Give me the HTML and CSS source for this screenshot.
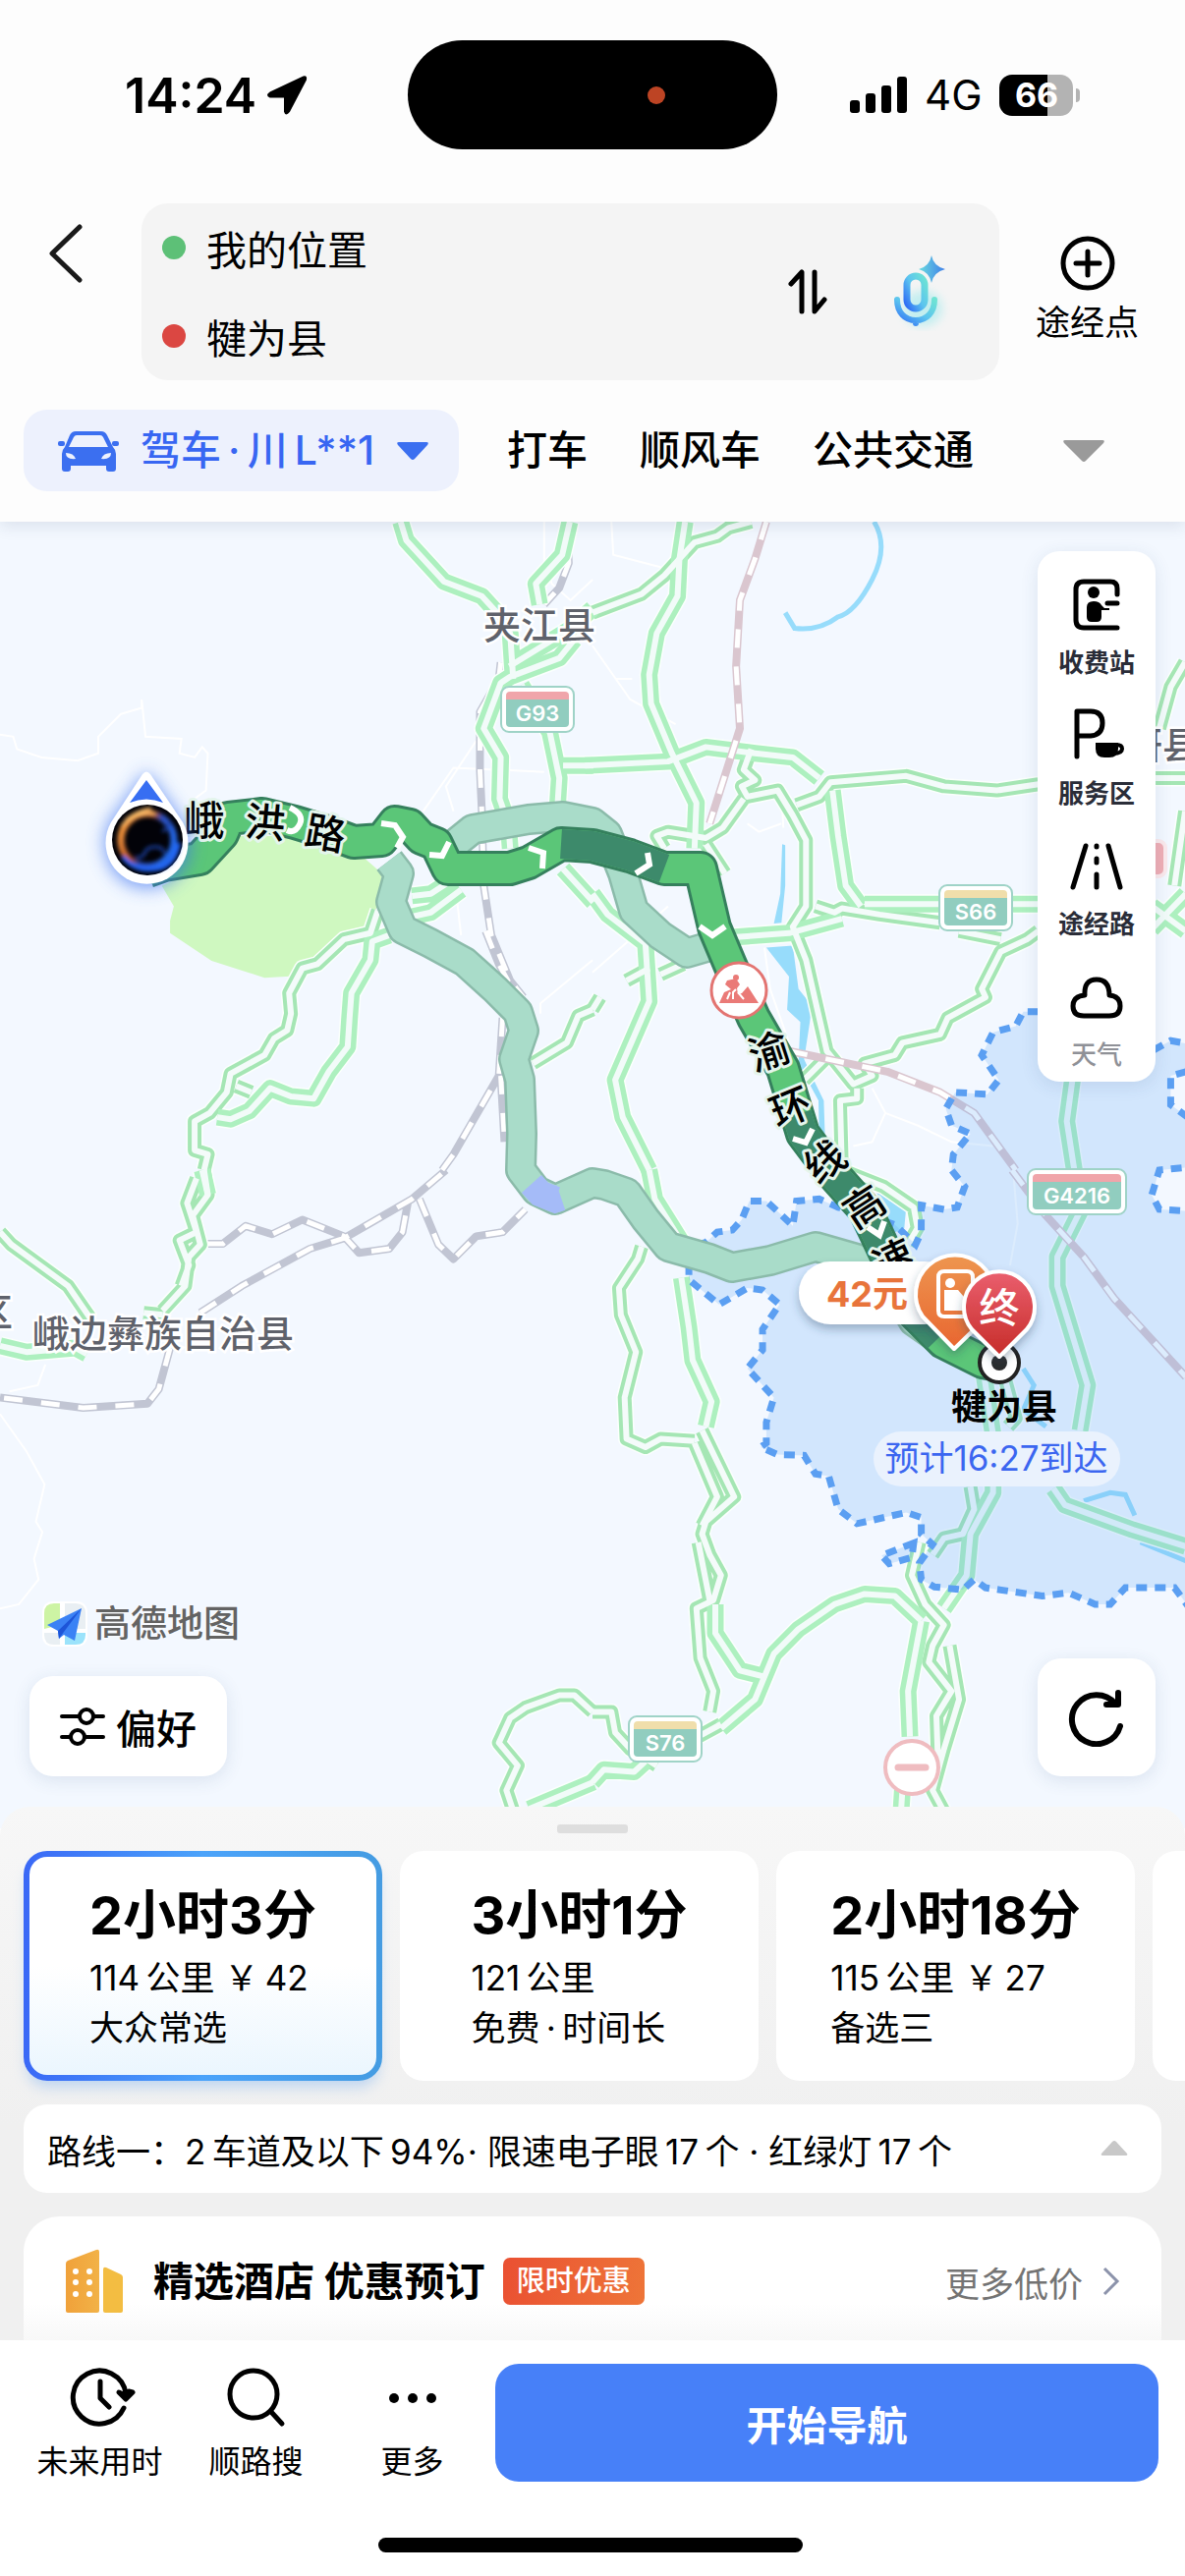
FILE: index.html
```html
<!DOCTYPE html>
<html lang="zh-CN">
<head>
<meta charset="utf-8">
<meta name="viewport" content="width=device-width">
<title>路线规划</title>
<link rel="stylesheet" href="styles.css">
</head>
<body>
<header class="header">
  <div class="status">
    <div class="status-left">
      <span class="clock">14:24</span>
      <svg width="42" height="42" viewBox="0 0 42 42"><path d="M38 2.500 4 18.500q-4 2.500 0 4h14q1 0 1 1v14q1 4 4 0L40 5q.8-3.600-2-2.500z" stroke="#000" stroke-width="2" stroke-linejoin="round"/></svg>
    </div>
    <div class="island"><span class="island-dot"></span></div>
    <div class="status-right">
      <svg width="60" height="38" viewBox="0 0 60 38"><rect x="1" y="24" width="10" height="13" rx="3"/><rect x="17" y="17" width="10" height="20" rx="3"/><rect x="33" y="9" width="10" height="28" rx="3"/><rect x="49" y="0" width="10" height="37" rx="3"/></svg>
      <span class="network">4G</span>
      <span class="battery">66</span>
      <span class="battery-nub"></span>
    </div>
  </div>

  <div class="search">
    <button class="back" aria-label="返回"><svg width="36" height="62" viewBox="0 0 36 62"><path d="M32 4 4 31l28 27"/></svg></button>
    <div class="places">
      <div class="fields">
        <label class="field"><span class="dot dot-start"></span><input type="text" value="我的位置" aria-label="起点"></label>
        <label class="field"><span class="dot dot-end"></span><input type="text" value="犍为县" aria-label="终点"></label>
      </div>
      <button class="plain" aria-label="交换"><svg class="line-icon" width="40" height="48" viewBox="0 0 40 48" stroke-width="5"><path d="M3 16 14 4v40M27 4v40l10-12"/></svg></button>
      <button class="plain mic" aria-label="语音"><svg width="60" height="80" viewBox="0 0 60 80">
        <defs>
          <linearGradient id="mic" x1="0" y1="1" x2="1" y2="0"><stop offset="0" stop-color="#2f6bf5"/><stop offset=".5" stop-color="#5cc4ef"/><stop offset="1" stop-color="#6ee3d4"/></linearGradient>
          <linearGradient id="spark" x1="0" y1="0" x2="1" y2="0"><stop offset="0" stop-color="#6adbe0"/><stop offset="1" stop-color="#3f7fe8"/></linearGradient>
          <filter id="soft" x="-50%" y="-50%" width="200%" height="200%"><feGaussianBlur stdDeviation="5"/></filter>
        </defs>
        <ellipse cx="32" cy="57" rx="20" ry="18" fill="#6be3e8" opacity=".35" filter="url(#soft)"/>
        <rect x="16" y="24" width="18" height="33" rx="9" fill="none" stroke="url(#mic)" stroke-width="7"/>
        <path d="M6 48c0 13 8 21 19 21s19-8 19-21M25 69v3" fill="none" stroke="url(#mic)" stroke-width="6" stroke-linecap="round"/>
        <path d="M41 3q2 11 14 14-12 3-14 14-2-11-13-14 11-3 13-14z" fill="url(#spark)"/>
      </svg></button>
    </div>
    <button class="plain via"><svg class="line-icon" width="56" height="56" viewBox="0 0 56 56" stroke-width="5"><circle cx="28" cy="28" r="25"/><path d="M28 16v24M16 28h24"/></svg><span>途经点</span></button>
  </div>

  <nav class="modes">
    <button class="mode mode-active">
      <svg width="62" height="44" viewBox="0 0 62 44"><path fill-rule="evenodd" d="M18 2h26q4 0 6 4l6 12q3 3 3 7v15q0 3-3 3h-4q-3 0-3-3v-3H13v3q0 3-3 3H7q-3 0-3-3V25q0-4 3-7l5-12q2-4 6-4zm1 4q-2 0-3 2l-5 10h40L46 8q-1-2-3-2zM8 24q0 7 10 6-2-6-10-6zm46 0q0 7-10 6 2-6 10-6z"/><rect x="0" y="12" width="7" height="5" rx="2"/><rect x="55" y="12" width="7" height="5" rx="2"/></svg>
      <span>驾车&thinsp;·&thinsp;川&thinsp;L**1</span>
      <svg width="34" height="20" viewBox="0 0 34 20"><path d="M3 1h28q3 0 1 3L19 18q-2 2-4 0L2 4Q0 1 3 1z"/></svg>
    </button>
    <button class="mode">打车</button>
    <button class="mode">顺风车</button>
    <button class="mode">公共交通</button>
    <button class="plain modes-more" aria-label="展开"><svg width="44" height="24" viewBox="0 0 44 24"><path d="M3 1h38q3 0 1 3L24 22q-2 2-4 0L2 4Q0 1 3 1z"/></svg></button>
  </nav>
</header>

<main class="map">
  <svg class="map-canvas" viewBox="0 0 1206 1330" preserveAspectRatio="xMidYMin slice">
    <defs>
      <g id="main-roads">
        <g class="nw"><path d="M1060 0 1075 45 1175 145 1275 180 1315 220 1350 270 1358 380M1520 285 1480 330 1350 375 1325 390 1280 500 1325 570 1322 670 1345 730 1350 790M1380 395 1455 510 1480 620 1475 690M1490 590H1570M1090 905 1140 900 1190 870M1090 955 1140 945 1220 890M1490 840 1570 920M1030 1000 985 1015 980 1060 930 1140 925 1200 920 1270 870 1330 830 1395 770 1390 715 1370 660 1425 610 1445 575 1440"/></g>
        <g class="ne"><path d="M-140 200-150 150-80 80-60 0M-220 350-60 260 0 210M245 0 230 90 225 180 170 270 150 370 155 440 210 560 275 680 270 790M-20 590 200 580 300 545 430 560 530 570 600 620M635 650 650 760 670 880 710 930M370 1005 520 995 660 960M720 925H1180M0 900 40 950 140 1020 150 1160 60 1350 80 1440 150 1568M1270 1350 1255 1450 1275 1568M1480 930 1570 990M1480 985 1570 900"/></g>
        <g class="sw"><path d="M0 425 70 440 200 430 230 445M1400 1545 1570 1480M535 0 550 60"/></g>
        <g class="se"><path d="M150 0 165 70 240 180M235 260 255 380 265 460 315 560 300 620M340 1350 430 1280 480 1170 545 1110 640 1050 720 1025 800 1030 870 1090M870 1090 835 1260 840 1370M820 1500 815 1570M325 1050V1120L390 1210 455 1225M1030 460 1060 640 1060 780 1000 880 990 980 930 1060M1290 100 1230 210V280L1310 520 1290 630M1220 770 1250 810 1430 870 1570 910M0 1480 30 1450 110 1455 140 1430"/></g>
      </g>
      <g id="side-roads">
        <g class="nw"><path d="M1000 940 980 995 910 1010 840 1070 800 1080 765 1140 770 1190 760 1230 725 1250 700 1290 610 1335 600 1380 555 1430 515 1450V1520L550 1530 540 1568M625 1365 665 1380M1568 1180 1530 1195 1500 1260 1410 1310"/></g>
        <g class="ne"><path d="M0 220 130 175 190 130 270 50 330 35 360 15 420 0M540 685 600 665 630 630 830 615 930 640 1070 650 1180 635M1490 620H1570M420 550 400 600 430 625 395 640 410 665 490 650 530 710 565 770V930L530 980 565 1060 620 1280 690 1360 740 1340 720 1310 800 1290 820 1260 920 1240 940 1200 1040 1150 1030 1130 1080 1040 1150 1010 1180 990M400 670 345 740 300 765 200 750 170 760 190 790M300 780 350 850M590 930 640 945 660 935 760 950 920 970M970 990 1080 1010M560 1350 620 1295M700 1370 700 1395 655 1400 660 1568M90 1110 150 1080M180 1095 240 1070M0 1180 20 1150M1568 340 1530 400 1500 500M1568 700 1540 880"/></g>
        <g class="sw"><path d="M540 0 550 60 510 110 530 180 500 210 490 280 430 340M520 20 495 80 520 150 475 170 500 230 480 280M0 150 30 180 180 280 240 360M380 345 430 350M1568 1310 1520 1270 1480 1270 1390 1300 1350 1325 1320 1385 1370 1440 1340 1500 1365 1568"/></g>
        <g class="se"><path d="M130 185 120 215 70 285 75 350 115 440 85 550 90 650 140 670 180 650 270 655M290 630 375 790 300 850 290 880 310 930 340 980 320 1040 275 1060 285 1180 320 1260 310 1310M270 660 330 790 290 860M280 900 310 1040M865 900 845 980 880 1050 930 1100 900 1150 890 1190 950 1260 910 1320 915 1450M945 1150 970 1280 930 1400 900 1500 940 1568M1000 765 1010 820 980 880 930 890 900 930M1090 500 1120 600 1100 620M660 0 770 40 850 90 860 140 835 180M0 1310 50 1310 60 1360 100 1400 170 1440M280 1370 340 1340"/></g>
      </g>
      <g id="railway">
        <g class="nw"><path d="M1500 0 1505 100 1480 160 1440 200M1325 340 1320 380 1270 460V600L1275 700 1280 880 1300 1000 1350 1110 1385 1150M1285 990 1320 1070 1350 1120M1330 1200 1320 1340 1200 1530 1170 1568M1325 1340 1335 1500"/></g>
        <g class="sw"><path d="M545 178H590L650 135 720 155 800 120 910 160 950 200 1030 190 1065 150 1080 75M530 345 640 280 820 190 910 165 1090 70 1180 0M1110 70 1160 180 1200 215 1260 160 1330 150 1390 95M450 430 420 530 390 565 220 575 0 550"/></g>
      </g>
      <g id="railway-east">
        <g class="ne"><path d="M460 0 430 90 390 190 380 350 390 500 310 730M520 1280 780 1330 920 1380 1010 1430 1120 1568"/></g>
        <g class="se"><path d="M1110 0 1200 110 1300 210 1380 310 1570 500"/></g>
      </g>
      <path id="bypass" d="M460 330 481 313 538 303 573 300 603 306 618 318 634 358 645 396 672 421 699 439 730 430"/>
      <path id="free-route" d="M396 345 406 358 398 387 410 415 438 429 473 448 504 476 527 499 533 518 523 547 529 568 531 623 530 660 546 681 565 690 603 673 615 675 638 683 657 710 680 738 722 750 745 759 784 752 830 738 872 750 911 782 930 814 957 833"/>
      <path id="route" d="M150 355 167 349 203 343 226 318 233 302 267 298 300 306 333 316 360 326 388 324 402 306 417 309 429 322 444 328 456 353 519 353 538 347 571 328 603 330 641 340 676 353 713 353 727 413 743 451 767 505 797 557 807 590 817 623 847 663 880 700 893 727 907 757 930 805 960 835 1000 855 1016 858"/>
      <linearGradient id="pin-orange" x2="0" y2="1"><stop offset="0" stop-color="#ee9650"/><stop offset="1" stop-color="#e86630"/></linearGradient>
      <linearGradient id="pin-red" x2="0" y2="1"><stop offset="0" stop-color="#ea5f6e"/><stop offset="1" stop-color="#c62c28"/></linearGradient>
      <linearGradient id="ring" x2="1" y2=".5"><stop offset=".1" stop-color="#f79a3c"/><stop offset=".5" stop-color="#b5502a"/><stop offset=".65" stop-color="#2d4fc0"/><stop offset="1" stop-color="#2468e8"/></linearGradient>
      <filter id="glow" x="-50%" y="-50%" width="200%" height="200%"><feGaussianBlur stdDeviation="9"/></filter>
      <filter id="fuzz" x="-50%" y="-50%" width="200%" height="200%"><feGaussianBlur stdDeviation="2"/></filter>
      <filter id="lift" x="-30%" y="-30%" width="160%" height="180%"><feDropShadow dx="0" dy="5" stdDeviation="5" flood-color="#28405f" flood-opacity=".35"/></filter>
    </defs>

    <g class="water">
      <g class="ne">
        <path class="stream" d="M745 0Q785 60 740 140T650 230Q600 265 535 258L510 220"/>
        <path d="M502 780 510 782 510 880 500 970 480 972 497 900zM460 1030 530 1025 545 1130 580 1170 575 1210 560 1300 580 1340 612 1400 615 1480 600 1480 598 1400 545 1310 550 1210 515 1180 520 1100z"/>
      </g>
      <g class="se">
        <path d="M750 50 830 90 825 140 800 150z"/>
        <path class="stream" d="M1300 800 1370 780 1410 785 1435 835M1140 480 1168 520 1140 580 1200 620M1450 900 1570 945"/>
      </g>
    </g>
    <g class="nw"><path class="park" d="M428 880 460 930 450 965 450 995 560 1062 700 1103 790 1098 850 1045 910 1000 975 985 1010 900 1010 850 960 810 900 800 780 760 620 760 560 790 500 850z"/></g>
    <g class="lanes">
      <g class="nw"><path d="M0 515 35 520 45 550 110 570 205 578 260 560V520L320 465 375 450V430L385 520 480 525 475 560 515 570 535 545 550 560 545 650 515 670M1120 700 1200 595 1440 605M1260 530 1180 640 1200 700M1210 920 1220 1000M1430 1190V1165L1568 1060M1440 0V90L1460 150 1510 190 1568 140M1400 310 1510 250"/></g>
      <g class="ne"><path d="M50 0 55 80 180 110M0 300 100 430 220 490M60 380H105M410 730 440 750 500 730M500 650 505 740M455 1030 470 1130 520 1260M740 1370 775 1430 740 1500 690 1510M775 1430 860 1460 950 1500 1060 1510M0 1090 200 930M240 880 180 770"/></g>
      <g class="sw"><path d="M120 470 100 520 25 535M0 590 70 680 118 760 95 850 112 875 90 940 102 990 50 1050 0 1060"/></g>
      <g class="se"><path d="M1115 20 1125 130 1105 230"/></g>
    </g>

    <use href="#railway" class="rail"/><use href="#railway" class="rail-dash"/>
    <use href="#side-roads" class="side-halo"/><use href="#main-roads" class="main-halo"/>
    <use href="#side-roads" class="side-edge"/><use href="#main-roads" class="main-edge"/>
    <use href="#side-roads" class="side-core"/><use href="#main-roads" class="main-core"/>
    <use href="#railway-east" class="rail rail-east"/><use href="#railway-east" class="rail-dash"/>

    <g class="ne">
      <path class="county" d="M1180 1185H1140L1120 1220 1060 1235 1030 1290 1075 1350 1045 1385 960 1380 935 1420 950 1460 1000 1480 955 1530 950 1568 985 1608 965 1658 930 1663 870 1653V1718L855 1748 800 1700 700 1668 650 1658 600 1638 540 1643 530 1703 490 1668 460 1643H415L395 1688 370 1713 330 1718 300 1743 255 1753V1833L335 1893 410 1853 450 1858 495 1893 450 1953V2003L410 2048 480 2118 460 2178V2228L445 2238 490 2256 560 2258 590 2303 625 2308 650 2388 700 2423 830 2396 870 2408V2448L900 2473 865 2518 870 2558 905 2576 980 2583 1010 2558 1040 2578 1190 2598 1260 2590 1330 2618H1370L1410 2578H1540L1590 2640V1668L1500 1663 1480 1628 1500 1568 1590 1560V1450L1530 1410V1340L1590 1325V1265L1530 1255 1480 1280 1300 1220z"/>
      <path class="county" d="M850 2470 765 2500 785 2520 845 2505z"/>
    </g>

    <g class="alt"><use href="#bypass" class="alt-edge"/><use href="#bypass" class="alt-fill"/><use href="#free-route" class="alt-edge"/><use href="#free-route" class="alt-fill"/><path class="alt-blue" d="M541 674 550 684 565 690 571 688"/></g>
    <use href="#route" class="route-edge"/><use href="#route" class="route-fill"/>
    <path class="route-slow" d="M571 328 603 330 641 340 676 353M811 603 817 623 847 663 880 700 893 727 907 757 930 805 955 831"/>
    <path class="arrows" d="M712 412 725 421 738 412M807 628 820 632 827 618M883 718 895 726 900 712M388 307 402 309 410 321 404 332M437 339 450 340 457 326M538 332 553 337 552 353M647 358 661 349 659 337M295 291Q310 298 305 308T292 314"/>

    <g class="place">
      <text x="492" y="119">夹江县</text>
      <text x="1145" y="241">研县</text>
      <text x="-25" y="818">区</text>
      <text x="33" y="840">峨边彝族自治县</text>
    </g>

    <g class="shield" transform="translate(510 168)"><rect width="74" height="46" rx="8"/><path d="M5 13V9q0-4 4-4h56q4 0 4 4v4z" fill="#f0a5aa"/><path d="M5 13h64v24q0 4-4 4H9q-4 0-4-4z"/><text x="37" y="35">G93</text></g>
    <g class="shield" transform="translate(956 370)"><rect width="74" height="46" rx="8"/><path d="M5 13V9q0-4 4-4h56q4 0 4 4v4z" fill="#f0deab"/><path d="M5 13h64v24q0 4-4 4H9q-4 0-4-4z"/><text x="37" y="35">S66</text></g>
    <g class="shield" transform="translate(640 1216)"><rect width="74" height="46" rx="8"/><path d="M5 13V9q0-4 4-4h56q4 0 4 4v4z" fill="#f0deab"/><path d="M5 13h64v24q0 4-4 4H9q-4 0-4-4z"/><text x="37" y="35">S76</text></g>
    <g class="shield" transform="translate(1046 659)"><rect width="100" height="46" rx="8"/><path d="M5 13V9q0-4 4-4h82q4 0 4 4v4z" fill="#f0a5aa"/><path d="M5 13h90v24q0 4-4 4H9q-4 0-4-4z"/><text x="50" y="35">G4216</text></g>
    <rect x="1120" y="325" width="66" height="36" rx="7" fill="#f0aeb5" stroke="#fbe9ec" stroke-width="4"/>

    <g class="route-name">
      <text transform="translate(208 305)" y="14">峨</text>
      <text transform="translate(270 307) rotate(5)" y="14">洪</text>
      <text transform="translate(331 318) rotate(10)" y="14">路</text>
      <text transform="translate(783 540) rotate(-18)" y="14">渝</text>
      <text transform="translate(805 597) rotate(-22)" y="14">环</text>
      <text transform="translate(840 652) rotate(-36)" y="14">线</text>
      <text transform="translate(880 698) rotate(-33)" y="14">高</text>
      <text transform="translate(910 752) rotate(-25)" y="14">速</text>
    </g>

    <g class="roadwork" transform="translate(752 477)"><circle r="28"/><path d="M-20 13-15 2-8-1-14-6-12-10-3-12 1-6-2-2-1 4 3 3 9-4 20 13z"/><circle class="head" cx="-3" cy="-13" r="3"/><path class="cut" d="M-12 9-9 2M-6 9-6 2-3-1M-1 2 5 9"/></g>
    <g class="closed" transform="translate(928 1268)"><circle r="27"/><path d="M-14 0h28"/></g>

    <path d="M149 254 112 305Q105 318 107 330A43 43 0 0 0 193 330Q195 318 186 305z" fill="#3f75f0" opacity=".7" filter="url(#glow)"/>
    <path d="M145 257q4-5 8 0l33 49A42 42 0 1 1 113 306z" fill="#fff"/>
    <path d="M149 263 132 286q17-7 34 0z" fill="#376ef2"/>
    <circle cx="150" cy="324" r="36" fill="#020208"/>
    <g fill="none" stroke="url(#ring)" filter="url(#fuzz)"><circle cx="150" cy="324" r="27" stroke-width="7"/><path d="M124 310q12-15 34-13M128 304q12-10 26-12" stroke="#ffc06a" stroke-width="3"/><path d="M138 341q5 3 9-3 2-7 11-7t9 7M165 315q6-2 8-10" stroke="#1c3fa0" stroke-width="3"/><path d="M125 341q14 18 40 11 14-6 17-25" stroke="#2468ff" stroke-width="4"/></g>

    <g filter="url(#lift)"><rect x="813" y="753" width="160" height="64" rx="32" fill="#fff"/></g>
    <text class="toll" x="841" y="799">42元</text>
    <g filter="url(#lift)"><path d="M971 842 939 809A40 40 0 1 1 1005 809z" fill="url(#pin-orange)" stroke="#fff" stroke-width="4" stroke-linejoin="round"/></g>
    <g fill="none" stroke="#fff" stroke-width="4"><path d="M990 777v-8q0-6-6-6h-23q-6 0-6 6v34q0 6 6 6h28"/><circle cx="967" cy="775" r="5" fill="#fff" stroke="none"/><path d="M961 782h14l6 7v14h-20z" fill="#fff" stroke="none"/></g>
    <circle cx="1017" cy="856" r="20" fill="#fff" stroke="#222" stroke-width="4"/><circle cx="1017" cy="856" r="8" fill="#2b2b2b"/>
    <g filter="url(#lift)"><path d="M1017 850 989 822A36 36 0 1 1 1045 822z" fill="url(#pin-red)" stroke="#fff" stroke-width="4" stroke-linejoin="round"/></g>
    <text class="pin-label" x="1017" y="815">终</text>
    <text class="destination" x="1022" y="914">犍为县</text>
    <rect x="889" y="926" width="251" height="56" rx="28" fill="#eaf2fd"/>
    <text class="eta" x="1014" y="966">预计16:27到达</text>
  </svg>

  <aside class="tools">
    <button class="tool"><svg class="line-icon" width="56" height="56" viewBox="0 0 56 56" stroke-width="5"><path d="M49 18V12q0-7-7-7H15q-8 0-8 8v31q0 8 8 8h34M39 27h10"/><circle cx="25" cy="16" r="6" class="solid"/><path class="solid" d="M18 31q0-6 7-6 6 0 8 4l3 3h5v2h-8v7q0 5-5 5h-5q-5 0-5-5z"/></svg><span>收费站</span></button>
    <button class="tool"><svg class="line-icon" width="56" height="56" viewBox="0 0 56 56" stroke-width="5"><path d="M8 50V4h14q12 0 12 12T22 29H8"/><path d="M48 38q6 0 6 4 0 5-9 5" stroke-width="4"/><path class="solid" d="M27 36h23v6q0 9-9 9h-5q-9 0-9-9z"/></svg><span>服务区</span></button>
    <button class="tool"><svg class="line-icon" width="56" height="56" viewBox="0 0 56 56" stroke-width="5"><path d="M17 8 4 50M40 8l12 42M28 8v1M28 21v4M28 37v13"/></svg><span>途经路</span></button>
    <button class="tool tool-muted"><svg class="line-icon" width="56" height="56" viewBox="0 0 56 56" stroke-width="5"><path d="M15 48q-11 0-11-10t12-11q-1-16 12-16t13 16q11 1 11 11t-11 10z"/></svg><span>天气</span></button>
  </aside>

  <div class="map-foot">
    <div class="map-foot-left">
      <div class="brand"><svg width="46" height="46" viewBox="0 0 46 46"><rect width="46" height="46" rx="10" fill="#fff"/><path d="M2 28V12Q2 2 12 2h6v22z" fill="#cdf4a4"/><path d="M23 2h11q10 0 10 10v16H23z" fill="#e9eff3"/><path d="M2 32h16v12h-6Q2 44 2 34z" fill="#e9eff3"/><path d="M23 44V32h21v2q0 10-10 10z" fill="#9be3fb"/><path d="M5 24 40 7 33 40 22 34l-5 4-1-8z" fill="#3b82f5"/><path d="M40 7 16 30l1 8 5-7z" fill="#1d55d8"/></svg><span>高德地图</span></div>
      <button class="float pref"><svg class="line-icon" width="46" height="44" viewBox="0 0 46 44" stroke-width="4"><path d="M2 12h17M35 12h9M2 33h9M26 33h18"/><circle cx="27" cy="12" r="7"/><circle cx="18" cy="33" r="7"/></svg><span>偏好</span></button>
    </div>
    <button class="float refresh" aria-label="刷新"><svg class="line-icon" width="60" height="60" viewBox="0 0 60 60" stroke-width="6"><path d="M54 39A25 25 0 1 1 49 16M52 5v12H40"/></svg></button>
  </div>
</main>

<section class="sheet">
  <div class="handle"></div>
  <div class="cards">
    <button class="card card-active"><span class="card-body"><strong>2小时3分</strong><span>114&thinsp;公里 ￥&thinsp;42</span><span>大众常选</span></span></button>
    <button class="card"><span class="card-body"><strong>3小时1分</strong><span>121&thinsp;公里</span><span>免费&thinsp;·&thinsp;时间长</span></span></button>
    <button class="card"><span class="card-body"><strong>2小时18分</strong><span>115&thinsp;公里 ￥&thinsp;27</span><span>备选三</span></span></button>
    <button class="card" aria-label="更多方案"></button>
  </div>
  <button class="summary"><span>路线一：2&thinsp;车道及以下&thinsp;94%· 限速电子眼&thinsp;17&thinsp;个 · 红绿灯&thinsp;17&thinsp;个</span><svg width="28" height="16" viewBox="0 0 28 16"><path d="M2 15h24q2 0 1-2L16 1q-2-2-4 0L1 13q-1 2 1 2z"/></svg></button>
  <div class="hotel">
    <svg width="60" height="66" viewBox="0 0 60 66"><defs><linearGradient id="tower"><stop offset="0" stop-color="#f0a13a"/><stop offset="1" stop-color="#f2b247"/></linearGradient></defs><path d="M1 15q0-2 2-3L32 1q3-1 3 2v60q0 2-2 2H3q-2 0-2-2z" fill="url(#tower)"/><path d="M39 21q0-3 3-2l15 7q2 1 2 3v34q0 2-2 2H41q-2 0-2-2z" fill="#f3bd42"/><g fill="#fff"><circle cx="11" cy="23" r="3"/><circle cx="25" cy="23" r="3"/><circle cx="11" cy="34" r="3"/><circle cx="25" cy="34" r="3"/><circle cx="11" cy="46" r="3"/><circle cx="25" cy="46" r="3"/></g></svg>
    <h2>精选酒店 优惠预订</h2>
    <span class="tag">限时优惠</span>
    <a class="more" href="#hotels">更多低价<svg width="18" height="30" viewBox="0 0 18 30"><path d="m2 2 13 13L2 28"/></svg></a>
  </div>
</section>

<footer class="footer">
  <div class="actions">
    <button class="action"><svg class="line-icon" width="72" height="66" viewBox="0 0 72 66" stroke-width="5"><path d="M60 43A27 27 0 1 1 62 28M36 16v17l9 9M55 27l7 7 7-7-4-1-4 4z"/></svg><span>未来用时</span></button>
    <button class="action"><svg class="line-icon" width="72" height="66" viewBox="0 0 72 66" stroke-width="5"><circle cx="33" cy="29" r="24"/><path d="m51 47 11 12"/></svg><span>顺路搜</span></button>
    <button class="action"><svg width="72" height="66" viewBox="0 0 72 66"><circle cx="17" cy="33" r="5"/><circle cx="36" cy="33" r="5"/><circle cx="55" cy="33" r="5"/></svg><span>更多</span></button>
    <button class="start">开始导航</button>
  </div>
  <div class="home-bar"></div>
</footer>
</body>
</html>
```
FILE: styles.css
```css
* { box-sizing: border-box; }

body {
  margin: 0;
  min-height: 100vh;
  display: flex;
  flex-direction: column;
  overflow-x: hidden;
  background: #fdfdfd;
  color: #000;
  font-family: Inter, "Noto Sans CJK SC", sans-serif;
}

button, input {
  margin: 0;
  padding: 0;
  border: 0;
  background: none;
  color: inherit;
  font: inherit;
}

svg { display: block; flex: none; }

.line-icon {
  fill: none;
  stroke: #000;
  stroke-linecap: round;
  stroke-linejoin: round;
}
.line-icon .solid { fill: #000; stroke: none; }

/* header */
.header {
  position: relative;
  z-index: 1;
  background: #fdfdfd;
  padding: 41px 0 31px;
  box-shadow: 0 4px 16px rgba(40, 60, 90, 0.12);
}
.status {
  display: grid;
  grid-template-columns: 1fr 376px 1fr;
  align-items: center;
  margin-bottom: 55px;
}
.status-left { display: flex; align-items: center; gap: 10px; padding-left: 127px; }
.clock { font-size: 50px; font-weight: 600; line-height: 60px; }
.island {
  height: 111px;
  border-radius: 56px;
  background: #000;
  display: flex;
  align-items: center;
  justify-content: flex-end;
  padding-right: 114px;
}
.island-dot { width: 18px; height: 18px; border-radius: 50%; background: #bd4424; }
.status-right { display: flex; align-items: center; padding-left: 73px; }
.network { font-size: 42px; margin: 0 18px 0 17px; }
.battery {
  width: 75px;
  height: 42px;
  border-radius: 13px;
  background: linear-gradient(90deg, #000 66%, #b3b3b3 66%);
  color: #fff;
  font-size: 34px;
  font-weight: 700;
  line-height: 42px;
  text-align: center;
}
.battery-nub { width: 4px; height: 14px; margin-left: 3px; border-radius: 0 4px 4px 0; background: #b3b3b3; }

.search { display: grid; grid-template-columns: 144px minmax(0, 1fr) 189px; margin-bottom: 30px; }
.back { height: 102px; padding-left: 49px; }
.back svg { fill: none; stroke: #1a1a1a; stroke-width: 5; stroke-linecap: round; stroke-linejoin: round; }
.places {
  display: flex;
  align-items: center;
  padding: 0 50px 0 21px;
  border-radius: 27px;
  background: #f4f4f4;
}
.fields { flex: 1; min-width: 0; }
.field { display: flex; align-items: center; gap: 21px; height: 90px; }
.field input { flex: 1; min-width: 0; height: 60px; font-size: 41px; }
.dot { width: 24px; height: 24px; border-radius: 50%; }
.dot-start { background: #5dc077; }
.dot-end { background: #db4742; }
.mic { margin-left: 65px; }
.via {
  display: flex;
  flex-direction: column;
  align-items: center;
  padding: 33px 10px 0 0;
  gap: 8px;
  font-size: 35px;
  line-height: 48px;
}

.modes { display: flex; align-items: center; gap: 53px; padding: 0 81px 0 24px; }
.mode { font-size: 41px; font-weight: 500; line-height: 83px; white-space: nowrap; }
.mode-active {
  display: flex;
  align-items: center;
  gap: 22px;
  margin-right: -4px;
  padding: 0 30px 0 35px;
  border-radius: 24px;
  background: #edf1fd;
  color: #3866f2;
}
.mode-active svg { fill: #3b6ff0; }
.modes-more { margin-left: auto; fill: #9a9a9a; }

/* map */
.map {
  position: relative;
  flex: 1;
  min-height: 1200px;
  display: flex;
  flex-direction: column;
  align-items: flex-end;
  justify-content: space-between;
  padding: 30px 30px 53px;
  background: #f3f8ff;
  overflow: hidden;
}
.map-canvas { position: absolute; inset: 0; width: 100%; height: 100%; }
.nw { transform: scale(0.3846, 0.4209); }
.ne { transform: translate(603px, 0) scale(0.3846, 0.4209); }
.sw { transform: translate(0, 660px) scale(0.3846, 0.4209); }
.se { transform: translate(603px, 660px) scale(0.3846, 0.4209); }
.map-canvas path { vector-effect: non-scaling-stroke; }
.map-canvas use { fill: none; stroke-linejoin: round; }

.water { fill: #97dcfb; }
.stream { fill: none; stroke: #97dcfb; stroke-width: 5; }
.park { fill: #cff8c0; }
.lanes { fill: none; stroke: #fff; stroke-width: 2; }
.rail { stroke: #c1c5d3; stroke-width: 8; }
.rail-east { stroke: #dac6cf; }
.rail-dash { stroke: #fff; stroke-width: 5; stroke-dasharray: 19 19; }
.side-halo { stroke: #fbfffd; stroke-width: 17; }
.main-halo { stroke: #fbfffd; stroke-width: 20; }
.side-edge { stroke: #a5e6b4; stroke-width: 14; }
.main-edge { stroke: #adf0bf; stroke-width: 17; }
.side-core { stroke: #f4fbfa; stroke-width: 6; }
.main-core { stroke: #f2fbf9; stroke-width: 6; }
.county { fill: rgba(90, 165, 245, 0.21); stroke: #5b9ff2; stroke-width: 7; stroke-dasharray: 11 8; }

.alt-edge { stroke: #8bbbaa; stroke-width: 32; }
.alt-fill { stroke: #a9dcc9; stroke-width: 27; }
.alt-blue { fill: none; stroke: #a5bbf8; stroke-width: 27; }
.route-edge { stroke: #35805d; stroke-width: 36; }
.route-fill { stroke: #5bc678; stroke-width: 30; }
.route-slow { fill: none; stroke: #3d8a6b; stroke-width: 30; stroke-linejoin: round; }
.arrows { fill: none; stroke: #fff; stroke-width: 6; }

.place { fill: #5f626b; stroke: #fff; stroke-width: 5; paint-order: stroke; font-size: 38px; font-weight: 500; }
.shield { fill: #91cdbf; }
.shield rect { fill: #fff; stroke: #9fd3c7; stroke-width: 2; }
.shield text { fill: #fff; font-size: 22px; font-weight: 600; text-anchor: middle; }
.route-name { font-size: 41px; font-weight: 500; text-anchor: middle; stroke: #e4f5ec; stroke-width: 6; stroke-linejoin: round; paint-order: stroke; }
.roadwork { fill: #ea7a77; }
.roadwork circle { fill: #fff; stroke: #e37471; stroke-width: 3; }
.roadwork .head { fill: #ea7a77; stroke: none; }
.cut { fill: none; stroke: #fff; stroke-width: 2; }
.closed { fill: #fff; stroke: #efbcc0; stroke-width: 4; }
.closed path { stroke-width: 7; stroke-linecap: round; }
.toll { fill: #e8743b; font-size: 36px; font-weight: 700; }
.pin-label { fill: #fff; font-size: 41px; font-weight: 500; text-anchor: middle; }
.destination { font-size: 36px; font-weight: 700; text-anchor: middle; }
.eta { fill: #3b66f0; font-size: 35px; text-anchor: middle; }

.tools {
  position: relative;
  width: 120px;
  padding: 26px 0 7px;
  border-radius: 22px;
  background: #fff;
  box-shadow: 0 4px 18px rgba(40, 70, 120, 0.12);
}
.tool {
  display: flex;
  flex-direction: column;
  align-items: center;
  gap: 12px;
  width: 100%;
  margin-bottom: 25px;
  color: #2a2d38;
  font-size: 26px;
  font-weight: 700;
  line-height: 40px;
}
.tool-muted { margin-bottom: 0; color: #8f9197; font-weight: 500; }

.map-foot { position: relative; width: 100%; display: flex; align-items: flex-end; justify-content: space-between; }
.brand {
  display: flex;
  align-items: center;
  gap: 7px;
  margin: 0 0 29px 13px;
  color: #636363;
  font-size: 37px;
  font-weight: 500;
  line-height: 48px;
  text-shadow: 0 0 3px #fff;
}
.float {
  display: flex;
  align-items: center;
  justify-content: center;
  border-radius: 24px;
  background: #fff;
  box-shadow: 0 4px 18px rgba(40, 70, 120, 0.12);
}
.pref { gap: 11px; width: 201px; height: 102px; font-size: 41px; font-weight: 500; }
.refresh { width: 120px; height: 120px; }

/* bottom sheet */
.sheet {
  position: relative;
  margin-top: -22px;
  padding: 18px 24px 0;
  border-radius: 30px 30px 0 0;
  background: linear-gradient(#f7f7f7, #f0f0f0 60%);
}
.handle { width: 72px; height: 9px; margin: 0 auto 18px; border-radius: 3px; background: #dedede; }
.cards {
  display: grid;
  grid-template-columns: repeat(4, 365px);
  gap: 18px;
  margin: 0 -24px;
  padding: 0 24px 24px;
  overflow: hidden;
}
.card {
  display: flex;
  align-items: center;
  justify-content: center;
  height: 234px;
  border: 6px solid transparent;
  border-radius: 24px;
  background: #fff;
}
.card-active {
  background: linear-gradient(#fff 50%, #ebf6fe) padding-box, linear-gradient(90deg, #3a68f6, #4ba3fa 50%, #459ce2) border-box;
  box-shadow: 0 10px 14px -4px rgba(110, 170, 240, 0.4);
}
.card-body { display: flex; flex-direction: column; text-align: left; font-size: 35px; line-height: 51px; }
.card-body strong { font-size: 54px; font-weight: 700; line-height: 76px; }
.summary {
  display: flex;
  align-items: center;
  justify-content: space-between;
  width: 100%;
  height: 90px;
  padding: 0 34px 0 24px;
  border-radius: 24px;
  background: #fff;
  font-size: 35px;
  white-space: nowrap;
}
.summary svg { fill: #c8c8c8; }
.hotel {
  display: flex;
  align-items: center;
  height: 126px;
  margin-top: 24px;
  padding: 6px 42px 0;
  border-radius: 36px 36px 0 0;
  background: linear-gradient(#fff 70%, #f8f8f8);
}
.hotel h2 { margin: 0 18px 0 30px; font-size: 41px; font-weight: 700; line-height: 60px; white-space: nowrap; }
.tag {
  padding: 0 14px;
  border-radius: 7px;
  background: linear-gradient(100deg, #ea5032, #ee7538);
  color: #fff;
  font-size: 29px;
  font-weight: 500;
  line-height: 48px;
}
.more { display: flex; align-items: center; gap: 20px; margin-left: auto; color: #747474; font-size: 35px; text-decoration: none; }
.more svg { fill: none; stroke: #8c93ab; stroke-width: 3; }

/* bottom bar */
.footer { background: #fff; padding: 24px 27px 24px 22px; }
.actions { display: grid; grid-template-columns: 159px 159px 159px 1fr; }
.action {
  display: flex;
  flex-direction: column;
  align-items: center;
  gap: 12px;
  padding-top: 2px;
  font-size: 32px;
  line-height: 40px;
}
.start {
  height: 120px;
  margin-left: 5px;
  border-radius: 24px;
  background: #4780f8;
  color: #fff;
  font-size: 41px;
  font-weight: 700;
}
.home-bar { width: 432px; height: 15px; margin: 57px auto 0; border-radius: 8px; background: #000; }
```
